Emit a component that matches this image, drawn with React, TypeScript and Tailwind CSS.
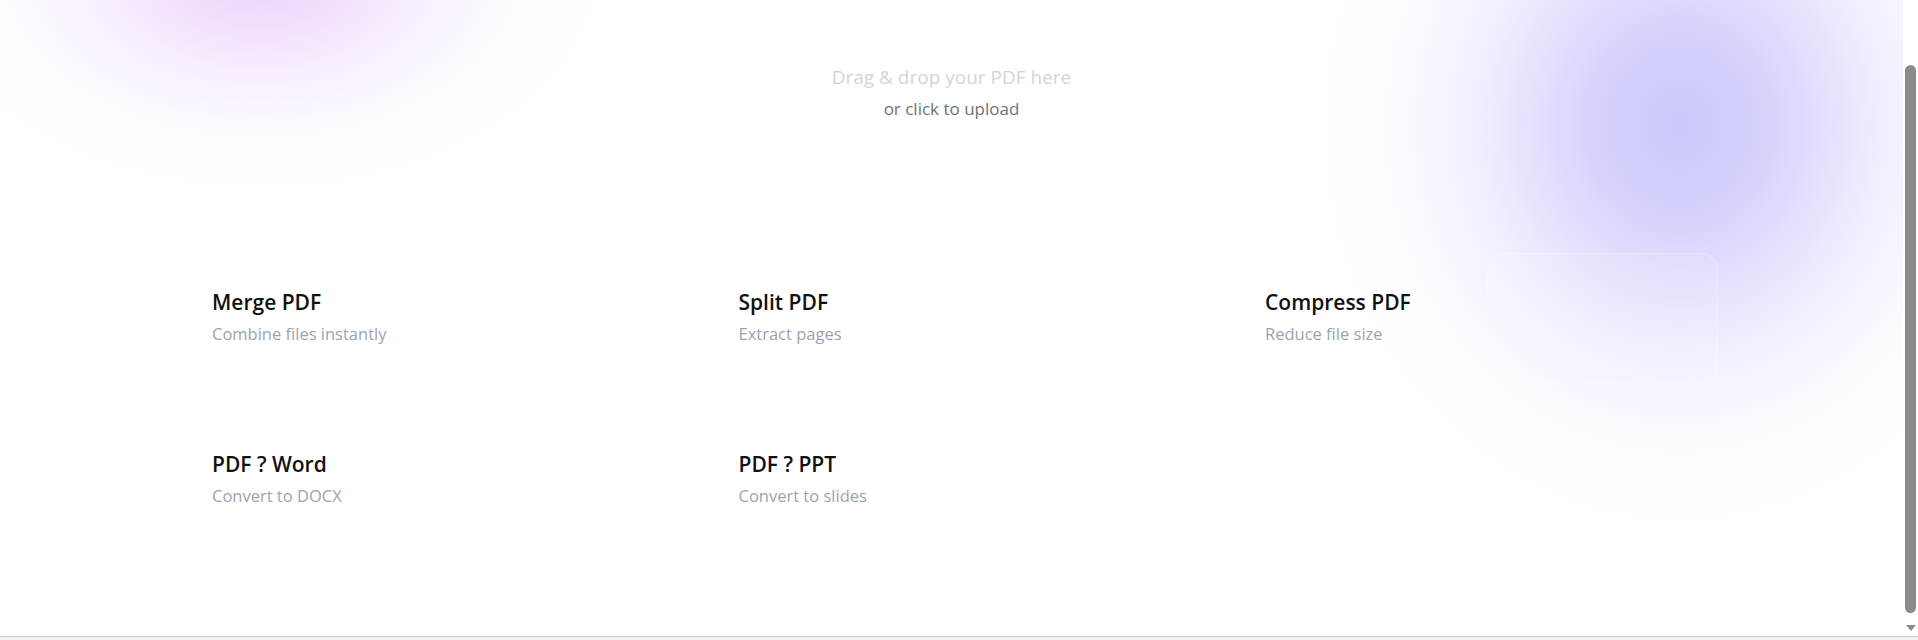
const TOOLS = [
  { title: "Merge PDF", desc: "Combine files instantly" },
  { title: "Split PDF", desc: "Extract pages" },
  { title: "Compress PDF", desc: "Reduce file size" },
  { title: "PDF ? Word", desc: "Convert to DOCX" },
  { title: "PDF ? PPT", desc: "Convert to slides" },
];

function ToolCard({ title, desc }: { title: string; desc: string }) {
  return (
    <div className="flex h-[130px] justify-between pl-10 pt-[35px] cursor-pointer">
      <div>
        <h3 className="text-[21px] leading-7 font-semibold text-[#111111]">{title}</h3>
        <p className="mt-[6px] text-[16.5px] leading-6 text-[#9ca3af]">{desc}</p>
      </div>
      {/* glass panel, only shows over the blobs */}
      <div className="-mt-[35px] h-[130px] w-[231px] rounded-2xl border border-white/30 bg-white/10" />
    </div>
  );
}

function Scrollbar() {
  return (
    <div className="flex w-[15px] flex-col items-center bg-white">
      <div className="mt-[65px] h-[548px] w-[11px] rounded-full bg-[#8b8b8b]" />
      <div className="mt-[12px] h-0 w-0 border-x-[5px] border-t-[6px] border-x-transparent border-t-[#8b8b8b]" />
    </div>
  );
}

export default function App() {
  return (
    <div className="flex h-[640px] w-full flex-col overflow-hidden bg-white font-['Open_Sans',sans-serif]">
      <div className="flex h-[636px]">
        <main className="flex-1 bg-[radial-gradient(ellipse_360px_400px_at_1680px_125px,rgba(202,199,251,1)_0%,rgba(207,204,252,0.85)_25%,rgba(222,220,253,0.5)_55%,rgba(240,239,254,0.2)_80%,transparent_100%),radial-gradient(ellipse_340px_220px_at_260px_-30px,rgba(232,208,252,1)_0%,rgba(240,224,253,0.6)_45%,rgba(248,240,254,0.25)_75%,transparent_100%)]">
          <div className="flex flex-col items-center pt-[63px] cursor-pointer">
            <p className="text-[19px] leading-7 text-[#d1d5db]">Drag &amp; drop your PDF here</p>
            <p className="mt-[6px] text-[17px] leading-6 text-[#6b7280]">or click to upload</p>
          </div>

          <div className="mt-[132px] grid w-[1546px] grid-cols-3 gap-x-[33.5px] gap-y-8 ml-[172px]">
            {TOOLS.map((t) => (
              <ToolCard key={t.title} title={t.title} desc={t.desc} />
            ))}
          </div>
        </main>
        <Scrollbar />
      </div>
      <div className="h-px bg-[#c9c9c9]" />
      <div className="flex-1 bg-[#f0f0f0]" />
    </div>
  );
}
